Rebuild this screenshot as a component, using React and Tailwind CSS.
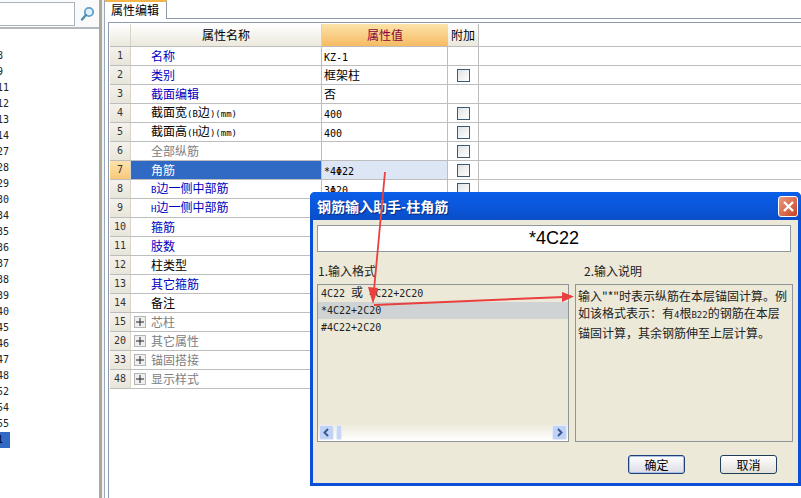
import React from "react";

const font = { fontFamily: '"Noto Sans CJK SC", "Liberation Sans", sans-serif' };
const mono = { fontFamily: '"DejaVu Sans Mono", "Liberation Mono", monospace' };
const nums = [8, 9, 11, 12, 13, 14, 27, 28, 29, 30, 34, 35, 36, 37, 38, 39, 40, 45, 46, 47, 48, 52, 54, 55];
const blue = "text-[#0000c0]";
const black = "text-black";
const gray = "text-[#808080]";
const rows = [
  { n: 1, name: "名称", c: blue, v: "KZ-1" },
  { n: 2, name: "类别", c: blue, v: "框架柱", box: true },
  { n: 3, name: "截面编辑", c: blue, v: "否" },
  { n: 4, name: "截面宽(B边)(mm)", c: black, v: "400", box: true },
  { n: 5, name: "截面高(H边)(mm)", c: black, v: "400", box: true },
  { n: 6, name: "全部纵筋", c: gray, v: "", box: true },
  { n: 7, name: "角筋", c: "text-white", v: "*4Φ22", box: true, active: true },
  { n: 8, name: "B边一侧中部筋", c: blue, v: "3Φ20", box: true },
  { n: 9, name: "H边一侧中部筋", c: blue, v: "", box: true },
  { n: 10, name: "箍筋", c: blue, v: "" },
  { n: 11, name: "肢数", c: blue, v: "" },
  { n: 12, name: "柱类型", c: black, v: "" },
  { n: 13, name: "其它箍筋", c: blue, v: "" },
  { n: 14, name: "备注", c: black, v: "" },
  { n: 15, name: "芯柱", c: gray, v: "", group: true },
  { n: 20, name: "其它属性", c: gray, v: "", group: true },
  { n: 33, name: "锚固搭接", c: gray, v: "", group: true },
  { n: 48, name: "显示样式", c: gray, v: "", group: true },
];

// latin runs are set smaller in a mono face, as the bitmap font of the original does
function Mixed({ text, size = "text-[9px]" }) {
  return text.split(/([\x20-\x7eΦ]+)/).map((part, i) =>
    i % 2 ? (
      <span key={i} className={`${size} whitespace-pre`} style={mono}>{part}</span>
    ) : (
      <React.Fragment key={i}>{part}</React.Fragment>
    )
  );
}

function Row({ r }) {
  return (
    <div className="flex h-[19px] border-b border-[#bdbdbd] text-[12px] leading-[18px]">
      <div className={`w-[21px] text-center text-[10px] text-[#333] border-r border-[#d8d5c8] ${r.active ? "bg-gradient-to-b from-[#fde3ab] to-[#f8c878]" : "bg-gradient-to-b from-[#f4f2ec] to-[#e8e5da]"}`} style={mono}>
        {r.n}
      </div>
      <div className={`w-[191px] flex items-center border-r border-[#bdbdbd] ${r.active ? "bg-[#316ac5]" : "bg-white"}`}>
        {r.group ? (
          <span className="ml-[3px] mr-[5px] w-[12px] h-[12px] border border-[#b5b5b5] bg-[#efefef] flex items-center justify-center">
            <svg width="10" height="10" viewBox="0 0 10 10"><path d="M5 1v8M1 5h8" stroke="#222" strokeWidth="1" /></svg>
          </span>
        ) : (
          <span className="w-[20px]" />
        )}
        <span className={r.c}><Mixed text={r.name} /></span>
      </div>
      <div className={`w-[126px] pl-[2px] text-black border-r border-[#bdbdbd] ${r.active ? "bg-[#dce6f4]" : "bg-white"}`}><Mixed text={r.v} size="text-[10px]" /></div>
      <div className="w-[31px] flex items-center justify-center border-r border-[#bdbdbd] bg-white">
        {r.box && <span className="w-[13px] h-[13px] border border-[#3c5a72] bg-gradient-to-br from-[#dfe3e6] to-white" />}
      </div>
    </div>
  );
}

function ScrollBtn({ dir }) {
  return (
    <span className="w-[15px] h-[15px] rounded-[2px] bg-[#c0d2f5] border border-[#e4ebfa] flex items-center justify-center">
      <svg width="9" height="9" viewBox="0 0 9 9">
        <path d={dir === "l" ? "M6 1 2.5 4.5 6 8" : "M3 1 6.5 4.5 3 8"} fill="none" stroke="#3b5a94" strokeWidth="2" />
      </svg>
    </span>
  );
}

export default function App() {
  return (
    <div className="relative flex w-[801px] h-[498px] overflow-hidden bg-white" style={font}>
      {/* left panel */}
      <div className="w-[99px] shrink-0 flex flex-col">
        <div className="h-[29px] flex items-center border-b-2 border-[#b4b9bd] bg-[#fafafa]">
          <div className="w-[75px] h-[24px] border border-[#a9b4bd] border-l-0 bg-white" />
          <svg className="ml-[5px]" width="15" height="16" viewBox="0 0 15 16">
            <circle cx="9" cy="6" r="4.2" fill="#dff0fa" stroke="#5f9fc8" strokeWidth="1.8" />
            <path d="M6 9 2 13.5" stroke="#4c8db8" strokeWidth="2.4" strokeLinecap="round" />
          </svg>
        </div>
        <div className="pt-[19px] text-[10px] leading-[16px] text-[#222]" style={mono}>
          {nums.map((n) => (
            <div key={n} className="h-[16px] -ml-[3px]">{n}</div>
          ))}
          <div className="h-[16px] w-[10px] bg-[#316ac5] text-black -indent-[3px]">1</div>
        </div>
      </div>
      {/* splitter */}
      <div className="w-[3px] shrink-0 bg-[#aca899]" />
      <div className="w-[3px] shrink-0 bg-[#f2f2f2] border-r border-[#9aa8bc]" />

      {/* right panel */}
      <div className="flex-1 flex flex-col min-w-0">
        <div className="flex h-[19px] border-b border-[#8c9aae]">
          <div className="w-[62px] h-[19px] border-r border-[#8c9aae] border-t-2 border-t-[#f5b54a] bg-white text-[12px] leading-[15px] pl-[6px] text-black">属性编辑</div>
        </div>
        <div className="flex-1 mt-[3px] ml-[3px] border-l border-t border-[#8c9aae] pl-[1px] pt-[1px]">
          <div className="flex h-[23px] text-[12px] leading-[22px] border-b border-[#bdbdbd]">
            <div className="w-[21px] bg-gradient-to-b from-white to-[#ebe8dc] border-r border-[#d8d5c8]" />
            <div className="w-[191px] text-center text-black bg-gradient-to-b from-white to-[#ebe8dc] border-r border-[#d8d5c8]">属性名称</div>
            <div className="w-[126px] text-center text-[#8b0038] bg-gradient-to-b from-[#fce3a8] to-[#f5bb62]">属性值</div>
            <div className="w-[31px] text-center text-black bg-gradient-to-b from-white to-[#ebe8dc] border-r border-[#bdbdbd]">附加</div>
          </div>
          {rows.map((r) => (
            <Row key={r.n} r={r} />
          ))}
        </div>
      </div>

      {/* dialog */}
      <div className="absolute left-[310px] top-[192px] w-[491px] h-[294px] rounded-t-[5px] bg-[#0a4fd8] px-[3px] pb-[3px] flex flex-col">
        <div className="h-[28px] -mx-[3px] rounded-t-[5px] bg-gradient-to-b from-[#0a5fe8] via-[#0a56dc] to-[#0a4ec8] flex items-center justify-between pl-[7px] pr-[3px]">
          <span className="text-white font-bold text-[14px]" style={{ textShadow: "1px 1px 1px #0a2a80" }}>钢筋输入助手-柱角筋</span>
          <span className="w-[20px] h-[21px] rounded-[3px] border border-white bg-gradient-to-br from-[#e89a80] to-[#c8401c] flex items-center justify-center">
            <svg width="13" height="13" viewBox="0 0 13 13"><path d="M2 2l9 9M11 2l-9 9" stroke="#fff" strokeWidth="2.4" /></svg>
          </span>
        </div>
        <div className="flex-1 bg-[#ece9d8] px-[4px] flex flex-col">
          <div className="mt-[5px] w-[474px] h-[27px] border border-[#8f9aa0] bg-white flex items-center justify-center text-[18px] text-black" style={{ fontFamily: '"Liberation Sans", sans-serif' }}>*4C22</div>
          <div className="flex mt-[11px] text-[12px] leading-[16px] text-[#222]">
            <span className="w-[267px] pl-[1px]">1.输入格式</span>
            <span>2.输入说明</span>
          </div>
          <div className="flex mt-[5px] h-[158px] gap-[6px]">
            <div className="w-[252px] border border-[#8f9499] flex flex-col text-[12px] leading-[14px] text-[#222]">
              <div className="flex-1">
                <div className="h-[17px] pl-[3px]"><Mixed text="4C22 或 4C22+2C20" size="text-[10px]" /></div>
                <div className="h-[17px] pl-[3px] bg-[#cfd3d3]"><Mixed text="*4C22+2C20" size="text-[10px]" /></div>
                <div className="h-[17px] pl-[3px]"><Mixed text="#4C22+2C20" size="text-[10px]" /></div>
              </div>
              <div className="h-[18px] flex items-center px-[1px] bg-gradient-to-b from-[#ece9d8] to-white">
                <ScrollBtn dir="l" />
                <span className="ml-[2px] w-[6px] h-[15px] rounded-[2px] bg-[#c8d6f5] border border-[#e4ebfa]" />
                <span className="flex-1" />
                <ScrollBtn dir="r" />
              </div>
            </div>
            <div className="w-[218px] border border-[#8f9499] px-[2px] pt-[2px] text-[12px] leading-[17px] text-[#222]">
              输入"*"时表示纵筋在本层锚固计算。例如该格式表示：有<span className="text-[9px]" style={mono}>4</span>根<span className="text-[9px]" style={mono}>B22</span>的钢筋在本层锚固计算，其余钢筋伸至上层计算。
            </div>
          </div>
          <div className="flex mt-[13px] text-[12px] text-black">
            <span className="ml-[311px] w-[57px] h-[19px] rounded-[3px] border border-[#1f3f78] bg-gradient-to-b from-white to-[#dcdce6] shadow-[inset_0_0_0_1px_#a9c0e8] flex items-center justify-center">确定</span>
            <span className="ml-[35px] w-[57px] h-[19px] rounded-[3px] border border-[#1f3f58] bg-gradient-to-b from-white to-[#e2e0d8] flex items-center justify-center">取消</span>
          </div>
        </div>
      </div>

      {/* annotation arrows */}
      <svg className="absolute left-0 top-0 pointer-events-none" width="801" height="498" viewBox="0 0 801 498">
        <path d="M385 172 374 290" stroke="#e8403f" strokeWidth="1.8" fill="none" />
        <path d="M378 288 373 304 368 287Z" fill="#e8403f" />
        <path d="M374 305 564 297" stroke="#e8403f" strokeWidth="2" fill="none" />
        <path d="M562 292 574 296.5 562 302Z" fill="#e8403f" />
      </svg>
    </div>
  );
}
